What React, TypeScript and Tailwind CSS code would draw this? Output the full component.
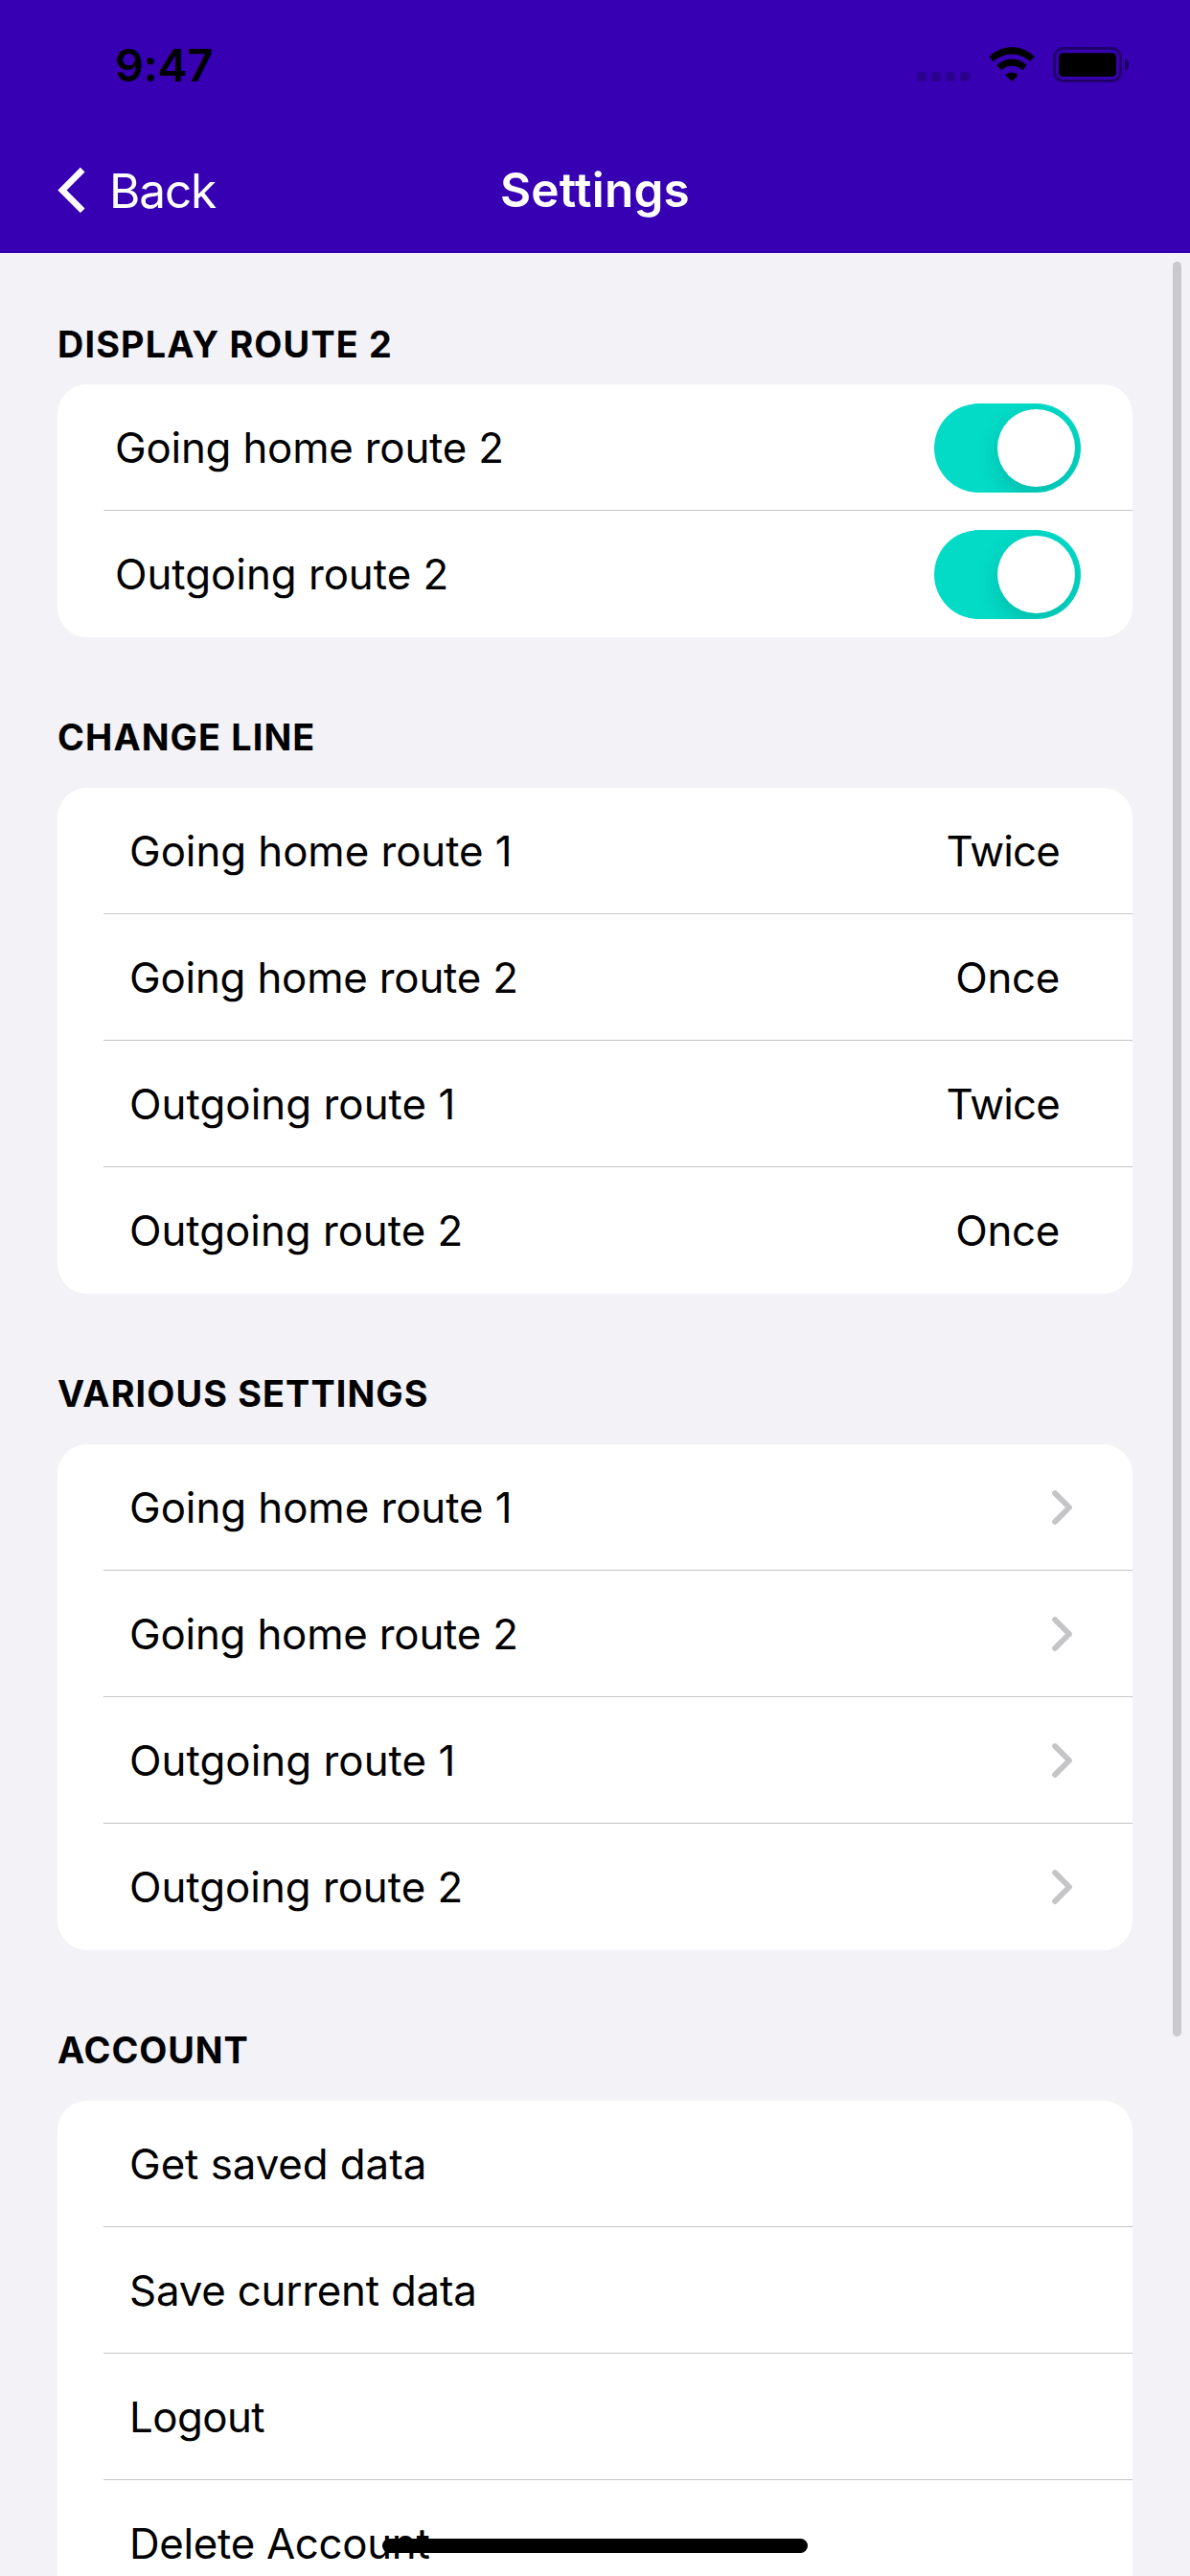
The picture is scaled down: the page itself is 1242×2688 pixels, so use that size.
import type { ReactNode } from "react";

type Item = { label: string; tracking: string; value?: ReactNode };

function BackChevron() {
  return (
    <svg className="h-[48px] w-[30px]" viewBox="0 0 30 48" fill="none">
      <path d="M26.2 3.2 5 24.5l21.2 21.3" stroke="white" strokeWidth="6.6" />
    </svg>
  );
}

function RowChevron() {
  return (
    <svg className="h-[36px] w-[22px]" viewBox="0 0 22 36" fill="none">
      <path
        d="M3.1 3.1 18 18 3.1 32.9"
        stroke="#c5c5c7"
        strokeWidth="5.8"
        strokeLinecap="round"
        strokeLinejoin="round"
      />
    </svg>
  );
}

function WifiIcon() {
  return (
    <svg className="h-[36px] w-[48px]" viewBox="0 0 48 36" fill="black">
      <path d="M.3 10.3A32.6 32.6 0 0 1 47.7 10.3L42.9 15.1A27.6 27.6 0 0 0 5.1 15.1Z" />
      <path d="M8.4 19A22 22 0 0 1 39.6 19L34.9 24.2A15.8 15.8 0 0 0 13.1 24.2Z" />
      <path d="M17.3 29.2A10 10 0 0 1 30.7 29.2L24 36Z" />
    </svg>
  );
}

function BatteryIcon() {
  return (
    <svg className="h-[37px] w-[79px]" viewBox="0 0 79 37" fill="none">
      <rect x="1.5" y="1.5" width="69" height="34" rx="9.5" stroke="black" strokeOpacity=".4" strokeWidth="3" />
      <rect x="6" y="6.3" width="60" height="24.7" rx="4.5" fill="black" />
      <path d="M75 11.5c2.4 1.4 4 4 4 7s-1.6 5.6-4 7Z" fill="black" fillOpacity=".5" />
    </svg>
  );
}

function Toggle() {
  return (
    <div className="flex h-[93px] w-[153px] items-center justify-end overflow-hidden rounded-full bg-[#03dbc7] pr-1.5">
      <div className="size-[81px] rounded-full bg-white shadow-[0_9px_24px_rgba(0,0,0,0.15)]" />
    </div>
  );
}

function Section({
  title,
  titleClass,
  padding,
  items,
}: {
  title: string;
  titleClass: string;
  padding: string;
  items: Item[];
}) {
  return (
    <section className="shrink-0">
      <h2 className={`h-[46px] text-[37.8px] leading-[46px] font-bold ${titleClass}`}>{title}</h2>
      <ul className="overflow-hidden rounded-[31px] bg-white pl-12">
        {items.map((item) => (
          <li
            key={item.label}
            className={`flex h-[132px] items-center justify-between shadow-[inset_0_-1px_0_#c5c5c7] last:shadow-none ${padding}`}
          >
            <span className={`mt-0.5 text-[43.8px] leading-[52px] ${item.tracking}`}>{item.label}</span>
            {item.value}
          </li>
        ))}
      </ul>
    </section>
  );
}

const twice = <span className="mt-0.5 text-[43.8px] leading-[52px] tracking-[-0.8px]">Twice</span>;
const once = <span className="mt-0.5 text-[43.8px] leading-[52px] tracking-[-0.3px]">Once</span>;

const home1 = { label: "Going home route 1", tracking: "tracking-[-0.05px]" };
const home2 = { label: "Going home route 2", tracking: "tracking-[-0.2px]" };
const out1 = { label: "Outgoing route 1", tracking: "tracking-[0.05px]" };
const out2 = { label: "Outgoing route 2", tracking: "tracking-[-0.02px]" };

export default function App() {
  return (
    <div className="relative flex h-[2688px] w-[1242px] flex-col overflow-hidden bg-[#f2f2f7] font-[Inter,sans-serif] text-black">
      <header className="h-[264px] shrink-0 bg-[#3700b3]">
        <div className="flex h-[132px] items-start justify-between pt-[49px] pr-16 pl-[120px]">
          <span className="-mt-2.5 text-[46.8px] leading-[58px] font-semibold tracking-[-0.14px]">9:47</span>
          <div className="flex items-start">
            <div className="mt-[26px] mr-[20px] flex gap-[5px]">
              <i className="size-[10px] rounded-[3px] bg-black/20" />
              <i className="size-[10px] rounded-[3px] bg-black/20" />
              <i className="size-[10px] rounded-[3px] bg-black/20" />
              <i className="size-[10px] rounded-[3px] bg-black/20" />
            </div>
            <WifiIcon />
            <div className="ml-[19px]">
              <BatteryIcon />
            </div>
          </div>
        </div>
        <nav className="grid h-[132px] grid-cols-[1fr_auto_1fr] items-center pr-[60px] pl-[60px] text-white">
          <div className="flex items-center gap-6">
            <BackChevron />
            <span className="mt-0.5 text-[49.5px] leading-[60px] tracking-[-1.15px]">Back</span>
          </div>
          <h1 className="text-[49.5px] leading-[60px] font-semibold tracking-[0.23px]">Settings</h1>
        </nav>
      </header>

      <main className="flex flex-col gap-[81px] px-[60px] pt-[72px]">
        <Section
          title="DISPLAY ROUTE 2"
          titleClass="mb-[19px] tracking-[1.13px]"
          padding="pl-3 pr-[54px]"
          items={[
            { ...home2, value: <Toggle /> },
            { ...out2, value: <Toggle /> },
          ]}
        />
        <Section
          title="CHANGE LINE"
          titleClass="mb-[30px] tracking-[1.1px]"
          padding="pl-[27px] pr-[76px]"
          items={[
            { ...home1, value: twice },
            { ...home2, value: once },
            { ...out1, value: twice },
            { ...out2, value: once },
          ]}
        />
        <Section
          title="VARIOUS SETTINGS"
          titleClass="mb-[30px] tracking-[1.1px]"
          padding="pl-[27px] pr-[62px]"
          items={[home1, home2, out1, out2].map((item) => ({ ...item, value: <RowChevron /> }))}
        />
        <Section
          title="ACCOUNT"
          titleClass="mb-[30px] tracking-[0.9px]"
          padding="pl-[27px]"
          items={[
            { label: "Get saved data", tracking: "tracking-[-0.05px]" },
            { label: "Save current data", tracking: "tracking-[-0.2px]" },
            { label: "Logout", tracking: "tracking-[-0.56px]" },
            { label: "Delete Account", tracking: "tracking-[-0.3px]" },
          ]}
        />
      </main>

      <div className="absolute top-[273px] right-[9px] h-[1852px] w-[9px] rounded-full bg-[#cacace]" />
      <div className="absolute bottom-[24px] left-[399px] h-[15px] w-[444px] rounded-full bg-black" />
    </div>
  );
}
